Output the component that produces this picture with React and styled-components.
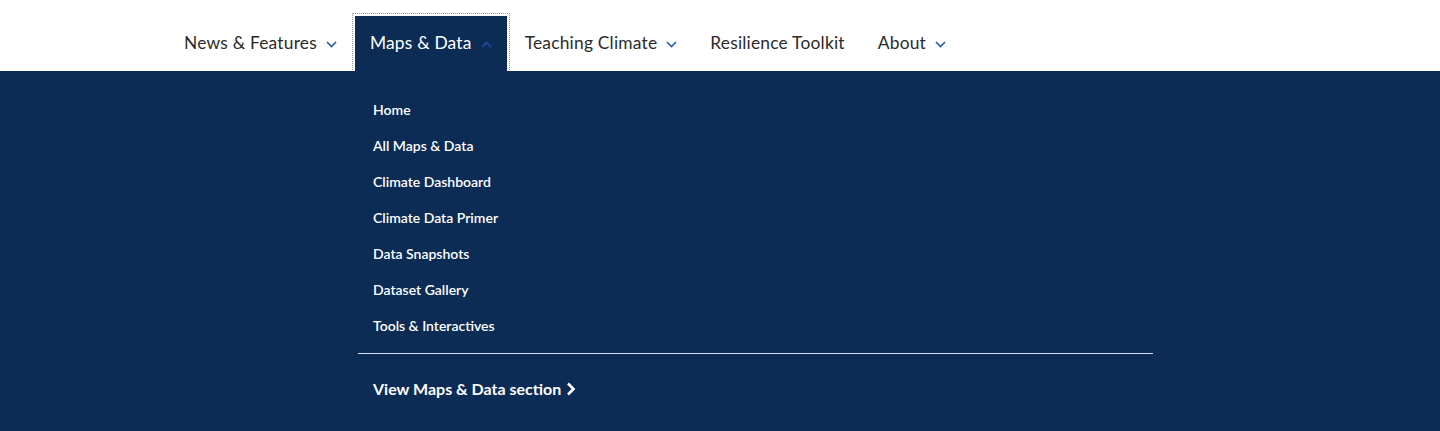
import React from 'react';
import styled, { createGlobalStyle } from 'styled-components';

const NAVY = '#0c2b55';

const GlobalStyle = createGlobalStyle`
	body {
		margin: 0;
		background: #fff;
		font-family: Lato, "Noto Sans", sans-serif;
	}
`;

//#region styles
const Page = styled.div`
	width: 1440px;
	height: 431px;
	overflow: hidden;
	display: flex;
	flex-direction: column;
`;

const Header = styled.header`
	height: 71px;
	display: flex;
	align-items: flex-end;
	padding-left: 169px;
	box-sizing: border-box;
`;

const Nav = styled.nav`
	display: flex;
	align-items: flex-end;
	gap: 3px;
`;

const NavItem = styled.a`
	height: 55px;
	display: flex;
	align-items: center;
	padding: 0 15px 2px;
	font-size: 17.4px;
	letter-spacing: 0.2px;
	color: ${(p) => (p.$active ? '#fff' : '#2b2b2b')};
	background: ${(p) => (p.$active ? NAVY : 'transparent')};
	outline: ${(p) => (p.$active ? '1px dotted #9a9a9a' : 'none')};
	outline-offset: 2px;
	text-decoration: none;
	cursor: pointer;
	box-sizing: border-box;
`;

const Chevron = styled.svg`
	margin-left: 9px;
	width: 11px;
	height: 7px;
	margin-top: 4px;
`;

const Panel = styled.div`
	flex: 1;
	background: ${NAVY};
	padding: 30px 0 0 358px;
`;

const Inner = styled.div`
	width: 795px;
`;

const LinkList = styled.ul`
	list-style: none;
	margin: 0;
	padding: 0 15px;
	display: flex;
	flex-direction: column;
	gap: 18px;
`;

const MenuLink = styled.li`
	color: #fff;
	font-size: 14px;
	font-weight: 600;
	line-height: 18px;
`;

const Divider = styled.hr`
	border: 0;
	border-top: 1px solid #d6dfec;
	margin: 18px 0 0;
`;

const SectionLink = styled.a`
	display: flex;
	align-items: center;
	gap: 5px;
	margin: 25px 15px 0;
	color: #fff;
	font-size: 16px;
	font-weight: 700;
	text-decoration: none;
`;
//#endregion

const DownIcon = ({ up, color }) => (
	<Chevron viewBox="0 0 11 7">
		<path
			d={up ? 'M1 6 L5.5 1.5 L10 6' : 'M1 1 L5.5 5.5 L10 1'}
			fill="none"
			stroke={color}
			strokeWidth="1.6"
		/>
	</Chevron>
);

const navItems = [
	{ label: 'News & Features', menu: true },
	{ label: 'Maps & Data', menu: true, active: true },
	{ label: 'Teaching Climate', menu: true },
	{ label: 'Resilience Toolkit', menu: false },
	{ label: 'About', menu: true },
];

const links = [
	'Home',
	'All Maps & Data',
	'Climate Dashboard',
	'Climate Data Primer',
	'Data Snapshots',
	'Dataset Gallery',
	'Tools & Interactives',
];

const App = () => (
	<>
		<GlobalStyle />
		<Page>
			<Header>
				<Nav>
					{navItems.map((item) => (
						<NavItem key={item.label} $active={item.active}>
							{item.label}
							{item.menu && (
								<DownIcon up={item.active} color={item.active ? '#1f4f9a' : '#2a5ba8'} />
							)}
						</NavItem>
					))}
				</Nav>
			</Header>
			<Panel>
				<Inner>
					<LinkList>
						{links.map((l) => (
							<MenuLink key={l}>{l}</MenuLink>
						))}
					</LinkList>
					<Divider />
					<SectionLink>
						View Maps &amp; Data section
						<svg width="10" height="14" viewBox="0 0 10 14">
							<path d="M2 1.5 L7.5 7 L2 12.5" fill="none" stroke="#fff" strokeWidth="2.6" />
						</svg>
					</SectionLink>
				</Inner>
			</Panel>
		</Page>
	</>
);

export default App;
